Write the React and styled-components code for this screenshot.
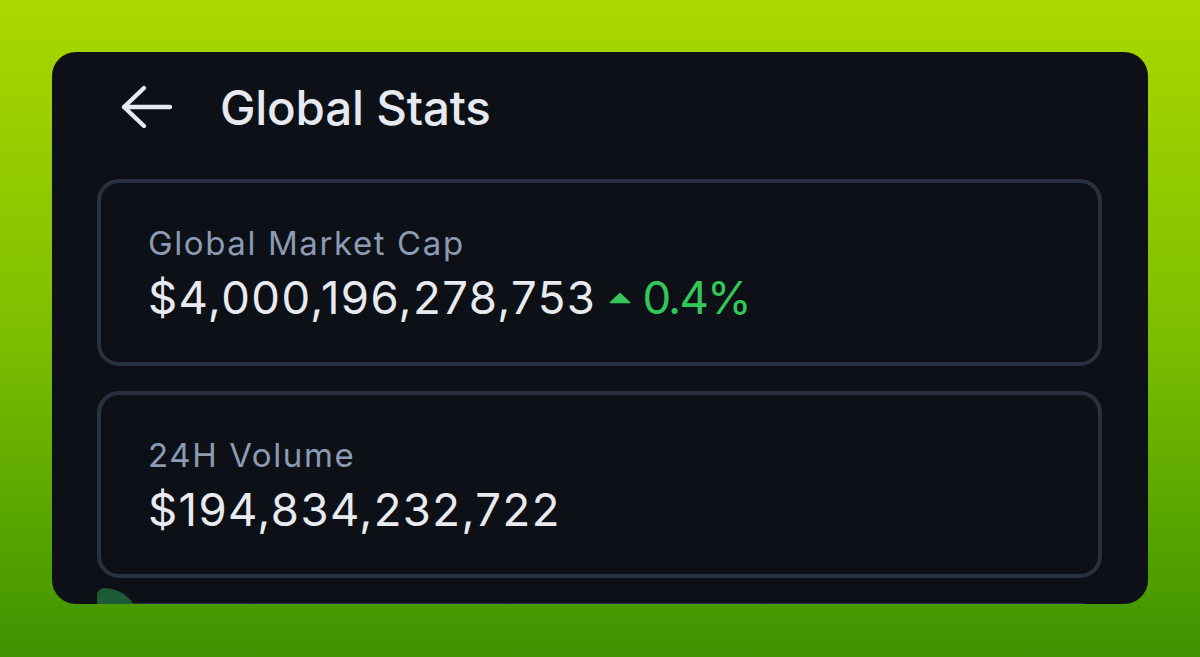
import React from 'react'
import styled, { createGlobalStyle } from 'styled-components'

const GlobalStyle = createGlobalStyle`
  html, body {
    margin: 0;
    padding: 0;
  }
  body {
    width: 1200px;
    height: 657px;
    overflow: hidden;
    font-family: Inter, "Noto Sans", sans-serif;
    background: linear-gradient(180deg, #abd800 0%, #7dbf00 50%, #3f9300 100%);
  }
`

const Page = styled.div`
  padding: 52px;
  height: 657px;
  box-sizing: border-box;
`

const Panel = styled.div`
  height: 552px;
  background: #0d1117;
  border-radius: 24px;
  overflow: hidden;
  padding: 0 46px 0 45px;
  box-sizing: border-box;
`

const Header = styled.div`
  height: 110px;
  display: flex;
  align-items: center;
  gap: 46px;
  padding-left: 23px;
`

const Title = styled.h1`
  margin: 0;
  font-size: 47.5px;
  font-weight: 500;
  color: #e6e9f0;
  letter-spacing: -0.2px;
`

const Cards = styled.div`
  display: flex;
  flex-direction: column;
  gap: 25px;
  margin-top: 17px;
`

const Card = styled.div`
  position: relative;
  border: 4px solid #28313f;
  border-radius: 22px;
  padding: 40px 47px 37px;
  min-height: 187px;
  box-sizing: border-box;
`

const Label = styled.div`
  font-size: 33px;
  line-height: 40px;
  letter-spacing: 1.6px;
  color: #8a9bb3;
`

const ValueRow = styled.div`
  display: flex;
  align-items: center;
  margin-top: 8px;
  height: 54px;
`

const Value = styled.span`
  font-size: 45.5px;
  line-height: 54px;
  letter-spacing: 1.4px;
  color: #e8eaf0;
`

const Change = styled.span`
  display: flex;
  align-items: center;
  gap: 11px;
  margin-left: 13px;
  font-size: 45.5px;
  line-height: 54px;
  letter-spacing: -1.8px;
  color: #33c75a;
`

const CoinDot = styled.div`
  position: absolute;
  left: -4px;
  top: -19px;
  width: 42px;
  height: 42px;
  border-radius: 8px 38px 0 0;
  background: #1d5a36;
`

const BackArrow = () => (
  <svg width="54" height="46" viewBox="0 0 54 46" fill="none">
    <path
      d="M4 23 H50 M24 4 L4 23 L24 42"
      stroke="#e6e9f0"
      strokeWidth="4.4"
      strokeLinecap="round"
      strokeLinejoin="round"
    />
  </svg>
)

const UpTriangle = () => (
  <svg width="22" height="12" viewBox="0 0 22 12">
    <path d="M11 1.5 L20.5 10.5 L1.5 10.5 Z" fill="#33c75a" stroke="#33c75a" strokeWidth="1.5" strokeLinejoin="round" />
  </svg>
)

const stats = [
  { label: 'Global Market Cap', value: '$4,000,196,278,753', change: '0.4%' },
  { label: '24H Volume', value: '$194,834,232,722' },
]

export default function App() {
  return (
    <>
      <GlobalStyle />
      <Page>
        <Panel>
          <Header>
            <BackArrow />
            <Title>Global Stats</Title>
          </Header>
          <Cards>
            {stats.map((s) => (
              <Card key={s.label}>
                <Label>{s.label}</Label>
                <ValueRow>
                  <Value>{s.value}</Value>
                  {s.change && (
                    <Change>
                      <UpTriangle />
                      {s.change}
                    </Change>
                  )}
                </ValueRow>
              </Card>
            ))}
            <Card>
              <CoinDot />
            </Card>
          </Cards>
        </Panel>
      </Page>
    </>
  )
}
